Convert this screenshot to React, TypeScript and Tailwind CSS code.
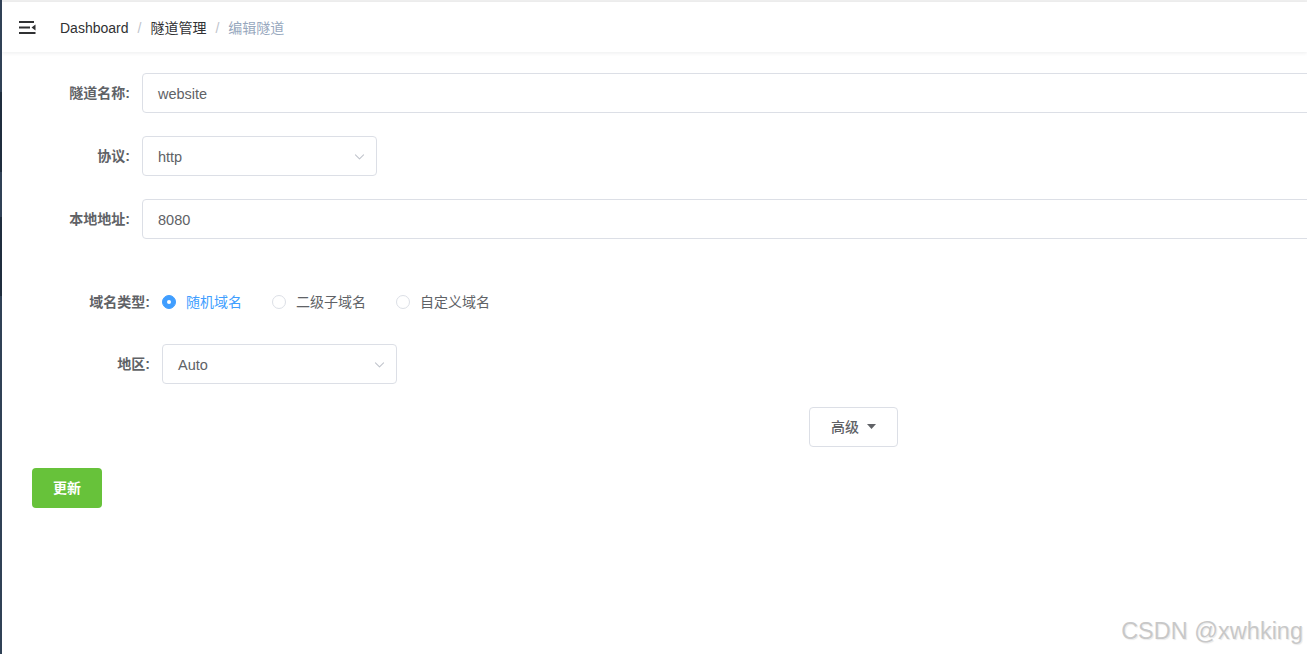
import { useState } from 'react'

const cjk = { fontFamily: '"Liberation Sans", "Noto Sans CJK SC", sans-serif' }

function Chevron() {
  return (
    <svg width="13" height="13" viewBox="0 0 16 16" fill="none" stroke="#c0c4cc" strokeWidth="1.3" strokeLinecap="round" strokeLinejoin="round">
      <polyline points="3 6 8 11 13 6" />
    </svg>
  )
}

function Radio({ label, checked, onClick }: { label: string; checked: boolean; onClick: () => void }) {
  return (
    <label onClick={onClick} className="flex items-center cursor-pointer mr-[30px]">
      <span
        className={
          checked
            ? 'w-[14px] h-[14px] rounded-full bg-[#409eff] border border-[#409eff] flex items-center justify-center'
            : 'w-[14px] h-[14px] rounded-full bg-white border border-[#dcdfe6]'
        }
      >
        {checked && <span className="w-[4px] h-[4px] rounded-full bg-white" />}
      </span>
      <span className={checked ? 'ml-[10px] text-[#409eff]' : 'ml-[10px] text-[#606266]'}>{label}</span>
    </label>
  )
}

export default function App() {
  const [domainType, setDomainType] = useState('random')

  return (
    <div className="flex w-[1307px] h-[654px] overflow-hidden bg-white text-sm text-[#606266]" style={cjk}>
      {/* collapsed sidebar edge */}
      <div className="w-[2px] flex-shrink-0 flex flex-col bg-[#304156]">
        <div className="h-[92px]" />
        <div className="h-[80px] bg-[#1f2d3d]" />
        <div className="h-[45px]" />
        <div className="h-[79px] bg-[#1f2d3d]" />
      </div>

      <div className="flex-1 flex flex-col min-w-0 relative overflow-hidden">
        <div className="h-[2px] bg-[#f0f0f0]" />
        <header className="h-[50px] flex items-center bg-white shadow-[0_1px_4px_rgba(0,21,41,0.08)] relative z-10">
          <div className="w-[58px] flex-shrink-0 pl-[17px] pt-[1px]">
            <svg width="17" height="15" viewBox="0 0 17 15" fill="#303133">
              <rect x="0" y="1" width="15" height="2" />
              <rect x="0" y="6.5" width="11" height="2" />
              <polygon points="16.5,4.5 16.5,10.5 12.5,7.5" />
              <rect x="0" y="12" width="16.5" height="2" />
            </svg>
          </div>
          <nav className="flex items-center pt-[2px] text-[14px]">
            <span className="text-[#303133]">Dashboard</span>
            <span className="mx-[9px] text-[#c0c4cc]">/</span>
            <span className="text-[#303133]">隧道管理</span>
            <span className="mx-[9px] text-[#c0c4cc]">/</span>
            <span className="text-[#97a8be]">编辑隧道</span>
          </nav>
        </header>

        <main className="flex-1 pt-[21px] pl-[20px]">
          <div className="flex items-center h-[40px] mb-[23px]">
            <label className="w-[120px] flex-shrink-0 pr-[12px] text-right font-bold">隧道名称:</label>
            <div className="w-[1300px] flex-shrink-0 h-[40px] flex items-center pl-[15px] pt-[2px] border border-[#dcdfe6] rounded-[4px] text-[14.5px]">website</div>
          </div>
          <div className="flex items-center h-[40px] mb-[23px]">
            <label className="w-[120px] flex-shrink-0 pr-[12px] text-right font-bold">协议:</label>
            <div className="w-[235px] flex-shrink-0 h-[40px] flex items-center justify-between pl-[15px] pr-[10px] border border-[#dcdfe6] rounded-[4px]">
              <span className="pt-[2px] text-[14.5px]">http</span>
              <Chevron />
            </div>
          </div>
          <div className="flex items-center h-[40px]">
            <label className="w-[120px] flex-shrink-0 pr-[12px] text-right font-bold">本地地址:</label>
            <div className="w-[1300px] flex-shrink-0 h-[40px] flex items-center pl-[15px] pt-[2px] border border-[#dcdfe6] rounded-[4px] text-[14.5px]">8080</div>
          </div>

          <div className="flex items-center h-[40px] mt-[43px] mb-[22px]">
            <label className="w-[140px] flex-shrink-0 pr-[12px] text-right font-bold">域名类型:</label>
            <div className="flex items-center">
              <Radio label="随机域名" checked={domainType === 'random'} onClick={() => setDomainType('random')} />
              <Radio label="二级子域名" checked={domainType === 'sub'} onClick={() => setDomainType('sub')} />
              <Radio label="自定义域名" checked={domainType === 'custom'} onClick={() => setDomainType('custom')} />
            </div>
          </div>
          <div className="flex items-center h-[40px] mb-[23px]">
            <label className="w-[140px] flex-shrink-0 pr-[12px] text-right font-bold">地区:</label>
            <div className="w-[235px] flex-shrink-0 h-[40px] flex items-center justify-between pl-[15px] pr-[10px] border border-[#dcdfe6] rounded-[4px]">
              <span className="pt-[2px] text-[14.5px]">Auto</span>
              <Chevron />
            </div>
          </div>

          <div className="flex ml-[787px] mb-[21px]">
            <button className="w-[89px] h-[40px] flex items-center justify-center gap-[8px] border border-[#dcdfe6] rounded-[4px] bg-white text-[#606266] font-medium">
              高级
              <svg width="9" height="6" viewBox="0 0 9 6" fill="#606266">
                <polygon points="0,0 9,0 4.5,5" />
              </svg>
            </button>
          </div>

          <div className="flex ml-[10px]">
            <button className="w-[70px] h-[40px] rounded-[4px] bg-[#67c23a] text-white font-bold">更新</button>
          </div>
        </main>

        <div className="absolute right-[4px] bottom-[5px] text-[23.5px] text-[#c8c8c8] [text-shadow:0_0_2px_#fff,1px_1px_1px_#e5e5e5]" style={{ fontFamily: '"Liberation Sans", sans-serif' }}>
          CSDN @xwhking
        </div>
      </div>
    </div>
  )
}
